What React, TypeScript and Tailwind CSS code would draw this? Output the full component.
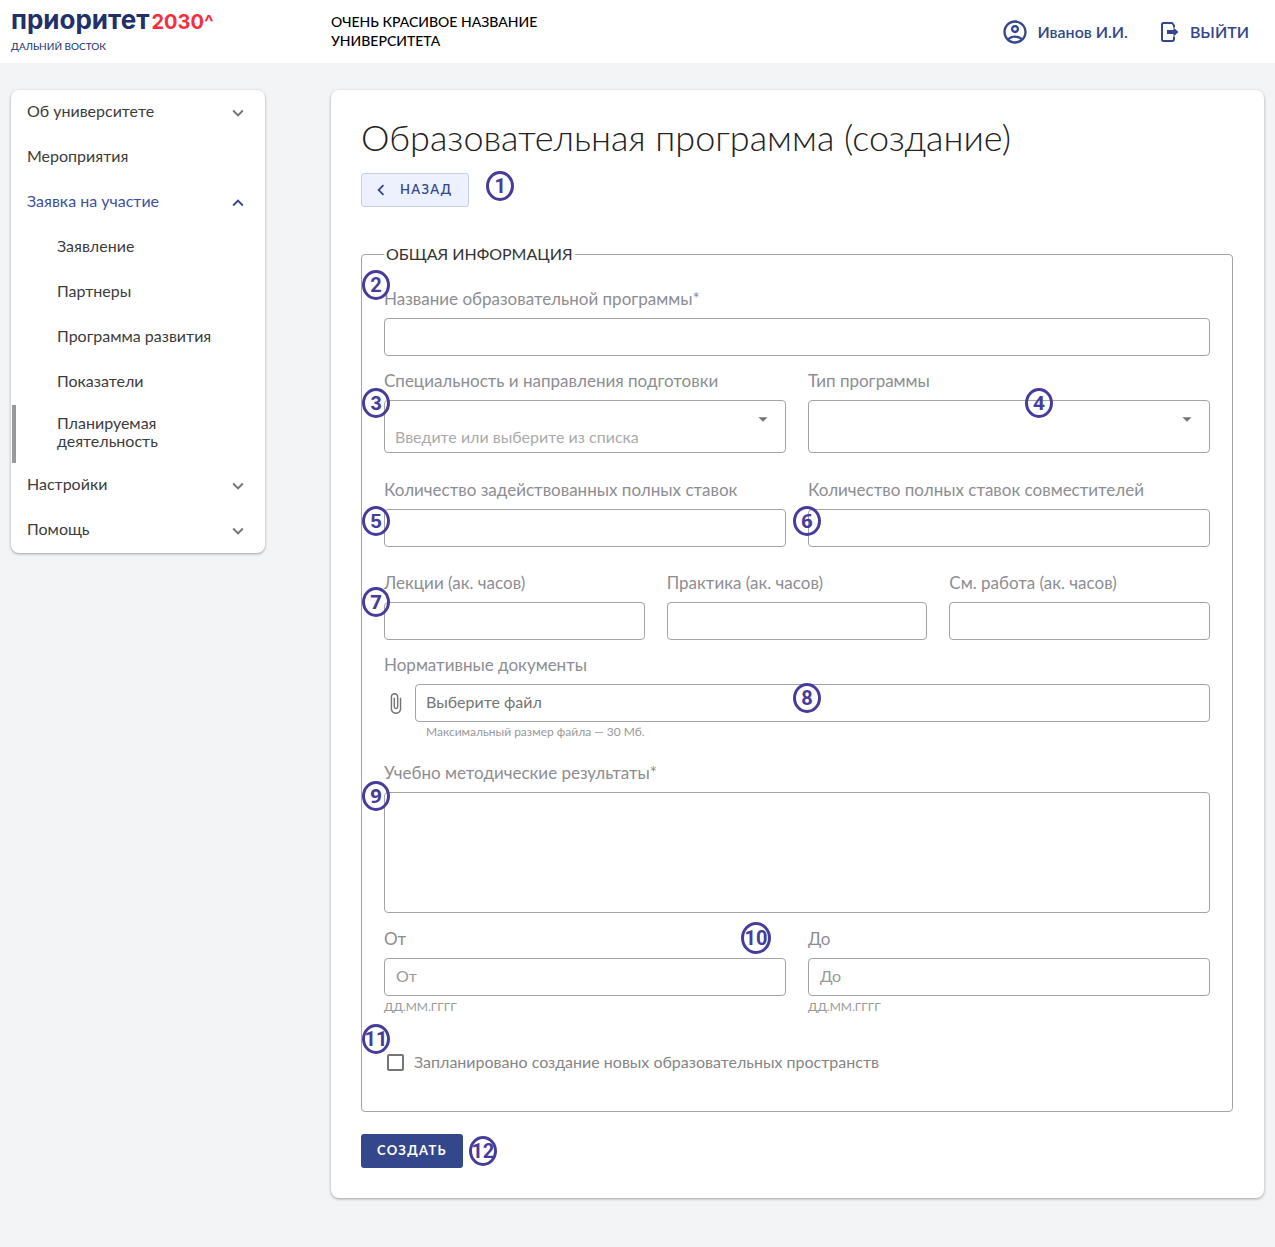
import { useId, type ReactNode } from "react";
import clsx from "clsx";
import {
  MdArrowDropDown,
  MdAttachFile,
  MdChevronLeft,
  MdExpandLess,
  MdExpandMore,
  MdOutlineAccountCircle,
} from "react-icons/md";

const control =
  "block w-full rounded border border-[#a3a3a3] bg-white px-[11px] text-base text-[#333] outline-none placeholder:text-[#999] focus:border-[#35478c]";

function Badge({ n, className }: { n: number; className?: string }) {
  const face =
    n === 3 || n === 5
      ? "font-['Liberation_Sans',sans-serif]"
      : [4, 6, 7, 9].includes(n)
        ? "font-['Open_Sans',sans-serif]"
        : "font-['Roboto',sans-serif]";
  return (
    <span
      className={clsx(
        "flex shrink-0 items-center justify-center rounded-[50%] border-3 border-[#473c99] text-xl leading-none font-bold text-[#473c99]",
        n === 10 ? "h-8 w-[30px]" : "h-[30px] w-7",
        face,
        className,
      )}
    >
      {n}
    </span>
  );
}

function Field({
  label,
  id,
  children,
  className,
}: {
  label: string;
  id: string;
  children: ReactNode;
  className?: string;
}) {
  return (
    <div className={clsx("relative", className)}>
      <label htmlFor={id} className="mb-2 block text-[17px] leading-[22px] text-[#8d8d92]">
        {label}
      </label>
      {children}
    </div>
  );
}

function TextField({
  label,
  placeholder,
  hint,
  badge,
}: {
  label: string;
  placeholder?: string;
  hint?: string;
  badge?: ReactNode;
}) {
  const id = useId();
  return (
    <Field label={label} id={id}>
      <input
        id={id}
        type="text"
        placeholder={placeholder}
        className={clsx(control, "h-[38px] pb-1")}
      />
      {hint && <p className="mt-[3px] text-xs leading-4 text-[#999]">{hint}</p>}
      {badge}
    </Field>
  );
}

function SelectField({
  label,
  placeholder = "",
  options,
  badge,
}: {
  label: string;
  placeholder?: string;
  options: string[];
  badge?: ReactNode;
}) {
  const id = useId();
  return (
    <Field label={label} id={id}>
      <div className="relative">
        <select
          id={id}
          defaultValue=""
          className="block h-[53px] w-full appearance-none rounded border border-[#a3a3a3] bg-white px-2.5 pt-5 text-base text-[#aaa] outline-none focus:border-[#35478c]"
        >
          <option value="">{placeholder}</option>
          {options.map((o) => (
            <option key={o}>{o}</option>
          ))}
        </select>
        <MdArrowDropDown className="pointer-events-none absolute top-2 right-3 size-[22px] text-[#757575]" />
      </div>
      {badge}
    </Field>
  );
}

type Item = { text: string; state?: "closed" | "open"; sub?: boolean; current?: boolean };

const menu: Item[] = [
  { text: "Об университете", state: "closed" },
  { text: "Мероприятия" },
  { text: "Заявка на участие", state: "open" },
  { text: "Заявление", sub: true },
  { text: "Партнеры", sub: true },
  { text: "Программа развития", sub: true },
  { text: "Показатели", sub: true },
  { text: "Планируемая деятельность", sub: true, current: true },
  { text: "Настройки", state: "closed" },
  { text: "Помощь", state: "closed" },
];

function MenuItem({ item }: { item: Item }) {
  const base = "flex w-full items-center justify-between text-left text-base leading-[18px]";
  if (item.state) {
    const open = item.state === "open";
    const Icon = open ? MdExpandLess : MdExpandMore;
    return (
      <button
        type="button"
        aria-expanded={open}
        className={clsx(base, "h-[45px] px-4", open ? "text-[#3d519c]" : "text-[#3c3c3c]")}
      >
        <span className="pb-1">{item.text}</span>
        <Icon className={clsx("size-[22px]", open ? "text-[#35478c]" : "text-[#757575]")} />
      </button>
    );
  }
  return (
    <a
      href="#"
      aria-current={item.current ? "page" : undefined}
      className={clsx(
        base,
        "text-[#3c3c3c]",
        item.sub ? "pr-10 pl-[46px]" : "px-4",
        item.current
          ? "relative h-[58px] before:absolute before:inset-y-0 before:left-px before:w-1 before:bg-[#999]"
          : "h-[45px]",
      )}
    >
      <span className="pb-1">{item.text}</span>
    </a>
  );
}

function ExitIcon() {
  return (
    <svg viewBox="0 0 20 22" className="h-[22px] w-5" fill="none" aria-hidden="true">
      <path
        d="M14 6.5V4.5L12 2H3.5Q2 2 2 3.5V18.5Q2 20 3.5 20H12Q14 20 14 18V15.5"
        stroke="currentColor"
        strokeWidth="2"
      />
      <path d="M7 9H13.5V6.5L18.5 11L13.5 15.5V13H7Z" fill="currentColor" />
    </svg>
  );
}

export default function App() {
  const ids = useId();
  return (
    <div className="min-h-screen bg-[#f2f4f6] pb-12 font-['Lato','Noto_Sans',sans-serif]">
      <header className="grid h-[63px] grid-cols-[254px_1fr] gap-x-[66px] bg-white px-[11px]">
        <a href="#" className="block pt-1 font-['Inter',sans-serif] text-[#21306b]">
          <span className="flex items-baseline gap-0.5 leading-8">
            <span className="text-[26px] font-bold">приоритет</span>
            <span className="text-xl font-bold text-[#fb2d3d]">2030^</span>
          </span>
          <span className="block font-['Lato',sans-serif] text-[10px] leading-5">
            ДАЛЬНИЙ ВОСТОК
          </span>
        </a>
        <div className="flex items-center justify-between">
          <p className="w-60 pb-0.5 text-sm leading-[19px] font-medium text-black">
            ОЧЕНЬ КРАСИВОЕ НАЗВАНИЕ УНИВЕРСИТЕТА
          </p>
          <div className="flex items-center gap-8 pr-[15px] text-base font-semibold text-[#35478c]">
            <a href="#" className="flex items-center gap-2">
              <MdOutlineAccountCircle className="size-7" />
              Иванов И.И.
            </a>
            <button type="button" className="flex items-center gap-2.5">
              <ExitIcon />
              ВЫЙТИ
            </button>
          </div>
        </div>
      </header>

      <div className="grid grid-cols-[254px_1fr] items-start gap-x-[66px] px-[11px] pt-[27px]">
        <nav className="rounded-lg bg-white shadow-[0_1px_3px_rgba(0,0,0,0.35)]">
          {menu.map((item) => (
            <MenuItem key={item.text} item={item} />
          ))}
        </nav>

        <main className="rounded-lg bg-white pt-[27px] pr-[31px] pb-[30px] pl-[30px] shadow-[0_1px_3px_rgba(0,0,0,0.35)]">
          <h1 className="text-4xl leading-10 font-light text-[#212121]">
            Образовательная программа (создание)
          </h1>
          <div className="mt-3.5 flex items-start gap-[17px]">
            <button
              type="button"
              className="mt-0.5 flex h-[34px] items-center gap-2 rounded-[3px] border border-[#c5cdec] bg-[#edf1fe] pr-4 pl-2 text-[13px] font-semibold tracking-widest text-[#35478c]"
            >
              <MdChevronLeft className="size-[22px]" />
              НАЗАД
            </button>
            <Badge n={1} />
          </div>

          <form onSubmit={(e) => e.preventDefault()}>
            <fieldset className="mt-9 rounded border border-[#a3a3a3] px-[22px] pb-[38px]">
              <legend className="px-0.5 text-base leading-[22px] text-[#333]">
                ОБЩАЯ ИНФОРМАЦИЯ
              </legend>
              <div className="pt-[23px]">
                <TextField
                  label="Название образовательной программы*"
                  badge={<Badge n={2} className="absolute -top-[18px] -left-[22px]" />}
                />
              </div>
              <div className="mt-3.5 grid grid-cols-2 gap-x-[22px] gap-y-[26px]">
                <SelectField
                  label="Специальность и направления подготовки"
                  placeholder="Введите или выберите из списка"
                  options={["Информатика", "Экономика"]}
                  badge={<Badge n={3} className="absolute top-[18px] -left-[22px]" />}
                />
                <SelectField
                  label="Тип программы"
                  options={["Бакалавриат", "Магистратура"]}
                  badge={<Badge n={4} className="absolute top-[18px] left-[54%]" />}
                />
                <TextField
                  label="Количество задействованных полных ставок"
                  badge={<Badge n={5} className="absolute top-[27px] -left-[22px]" />}
                />
                <TextField
                  label="Количество полных ставок совместителей"
                  badge={<Badge n={6} className="absolute top-[27px] -left-[15px]" />}
                />
              </div>
              <div className="mt-[25px] grid grid-cols-3 gap-x-[22px]">
                <TextField
                  label="Лекции (ак. часов)"
                  badge={<Badge n={7} className="absolute top-[15px] -left-[22px]" />}
                />
                <TextField label="Практика (ак. часов)" />
                <TextField label="См. работа (ак. часов)" />
              </div>

              <Field label="Нормативные документы" id={`${ids}-file`} className="mt-3.5">
                <div className="flex items-center gap-2">
                  <MdAttachFile className="size-[23px] shrink-0 text-[#757575]" />
                  <label
                    htmlFor={`${ids}-file`}
                    className="flex h-[38px] flex-1 cursor-pointer items-center rounded border border-[#a3a3a3] px-2.5 pb-0.5 text-base text-[#757575]"
                  >
                    Выберите файл
                    <input id={`${ids}-file`} type="file" className="sr-only" />
                  </label>
                </div>
                <p className="mt-0.5 ml-[42px] text-xs leading-4 text-[#999]">
                  Максимальный размер файла — 30 Мб.
                </p>
                <Badge n={8} className="absolute top-[29px] left-1/2 -ml-1" />
              </Field>

              <Field
                label="Учебно методические результаты*"
                id={`${ids}-results`}
                className="mt-[22px]"
              >
                <textarea
                  id={`${ids}-results`}
                  className={clsx(control, "h-[121px] resize-none py-2")}
                />
                <Badge n={9} className="absolute top-[19px] -left-[22px]" />
              </Field>

              <div className="mt-[15px] grid grid-cols-2 gap-x-[22px]">
                <TextField
                  label="От"
                  placeholder="От"
                  hint="ДД.ММ.ГГГГ"
                  badge={<Badge n={10} className="absolute -top-1.5 right-[15px]" />}
                />
                <TextField label="До" placeholder="До" hint="ДД.ММ.ГГГГ" />
              </div>

              <div className="relative mt-9">
                <label className="flex items-center gap-2.5 pl-[3px] text-base leading-[22px] text-[#858585]">
                  <input
                    type="checkbox"
                    className="size-[17px] appearance-none rounded-xs border-2 border-[#757575] checked:bg-[#35478c]"
                  />
                  Запланировано создание новых образовательных пространств
                </label>
                <Badge n={11} className="absolute -top-[27px] -left-[22px]" />
              </div>
            </fieldset>

            <div className="mt-[22px] flex items-center gap-1.5">
              <button
                type="submit"
                className="h-[34px] rounded-[3px] bg-[#35478c] px-4 text-[13px] font-bold tracking-widest text-white"
              >
                СОЗДАТЬ
              </button>
              <Badge n={12} />
            </div>
          </form>
        </main>
      </div>
    </div>
  );
}
